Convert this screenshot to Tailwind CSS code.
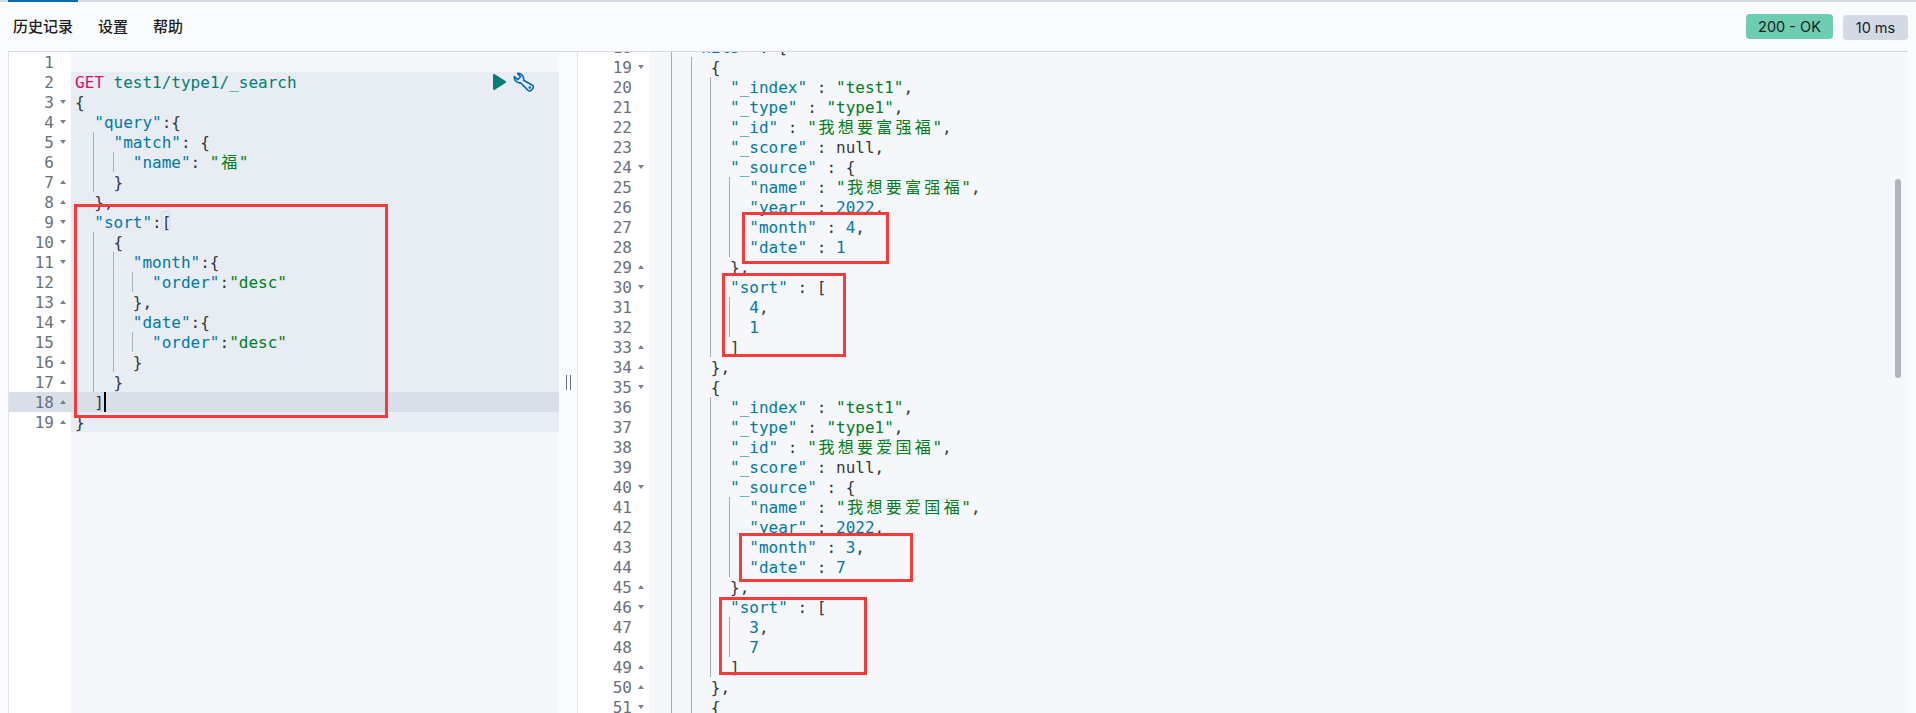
<!DOCTYPE html>
<html lang="zh">
<head>
<meta charset="utf-8">
<script src="https://cdn.jsdelivr.net/npm/@tailwindcss/browser@4"></script>
<title>Console</title>
</head>
<body class="relative h-[713px] w-[1916px] overflow-hidden bg-[#fafbfd] font-['Inter',sans-serif] text-[#1a1c21]">

<div class="h-[2px] bg-[#d3dae6]"><div class="ml-[8px] h-full w-[70px] bg-[#006bb4]"></div></div>

<header class="mx-[8px] flex h-[50px] items-center border-b border-[#d3dae6] pl-[5px]">
  <nav class="flex gap-[25px] pb-[1px] font-['Noto_Sans_CJK_SC',sans-serif] text-[15px] font-medium text-[#1a1c21]">
    <span>历史记录</span><span>设置</span><span>帮助</span>
  </nav>
  <div class="ml-auto flex items-start gap-[10px] pt-[1px] text-[14.5px]">
    <span class="flex h-[25px] w-[87px] items-center justify-center rounded-[4px] bg-[#6dccb1]">200 - OK</span>
    <span class="mt-[1px] flex h-[25px] w-[65px] items-center justify-center rounded-[4px] bg-[#d3dae6]">10 ms</span>
  </div>
</header>

<main class="mx-[8px] flex h-[661px] font-['DejaVu_Sans_Mono','Noto_Sans_CJK_SC',monospace] text-[16px] leading-[22px]">

  <section class="flex w-[569px] shrink-0">
    <div class="w-[63px] shrink-0 border-l border-[#dfe4ee] bg-white text-[#69707d]">
      <div class="flex h-5 justify-end">1<span class="w-[17px]"></span></div>
      <div class="flex h-5 justify-end">2<span class="w-[17px]"></span></div>
      <div class="flex h-5 justify-end">3<span class="flex h-5 w-[17px] items-center pl-[6px]"><span class="border-x-[3px] border-t-[4px] border-x-transparent border-t-[#7b808a]"></span></span></div>
      <div class="flex h-5 justify-end">4<span class="flex h-5 w-[17px] items-center pl-[6px]"><span class="border-x-[3px] border-t-[4px] border-x-transparent border-t-[#7b808a]"></span></span></div>
      <div class="flex h-5 justify-end">5<span class="flex h-5 w-[17px] items-center pl-[6px]"><span class="border-x-[3px] border-t-[4px] border-x-transparent border-t-[#7b808a]"></span></span></div>
      <div class="flex h-5 justify-end">6<span class="w-[17px]"></span></div>
      <div class="flex h-5 justify-end">7<span class="flex h-5 w-[17px] items-center pl-[6px]"><span class="border-x-[3px] border-b-[4px] border-x-transparent border-b-[#7b808a]"></span></span></div>
      <div class="flex h-5 justify-end">8<span class="flex h-5 w-[17px] items-center pl-[6px]"><span class="border-x-[3px] border-b-[4px] border-x-transparent border-b-[#7b808a]"></span></span></div>
      <div class="flex h-5 justify-end">9<span class="flex h-5 w-[17px] items-center pl-[6px]"><span class="border-x-[3px] border-t-[4px] border-x-transparent border-t-[#7b808a]"></span></span></div>
      <div class="flex h-5 justify-end">10<span class="flex h-5 w-[17px] items-center pl-[6px]"><span class="border-x-[3px] border-t-[4px] border-x-transparent border-t-[#7b808a]"></span></span></div>
      <div class="flex h-5 justify-end">11<span class="flex h-5 w-[17px] items-center pl-[6px]"><span class="border-x-[3px] border-t-[4px] border-x-transparent border-t-[#7b808a]"></span></span></div>
      <div class="flex h-5 justify-end">12<span class="w-[17px]"></span></div>
      <div class="flex h-5 justify-end">13<span class="flex h-5 w-[17px] items-center pl-[6px]"><span class="border-x-[3px] border-b-[4px] border-x-transparent border-b-[#7b808a]"></span></span></div>
      <div class="flex h-5 justify-end">14<span class="flex h-5 w-[17px] items-center pl-[6px]"><span class="border-x-[3px] border-t-[4px] border-x-transparent border-t-[#7b808a]"></span></span></div>
      <div class="flex h-5 justify-end">15<span class="w-[17px]"></span></div>
      <div class="flex h-5 justify-end">16<span class="flex h-5 w-[17px] items-center pl-[6px]"><span class="border-x-[3px] border-b-[4px] border-x-transparent border-b-[#7b808a]"></span></span></div>
      <div class="flex h-5 justify-end">17<span class="flex h-5 w-[17px] items-center pl-[6px]"><span class="border-x-[3px] border-b-[4px] border-x-transparent border-b-[#7b808a]"></span></span></div>
      <div class="flex h-5 justify-end bg-[#d9dfe9]">18<span class="flex h-5 w-[17px] items-center pl-[6px]"><span class="border-x-[3px] border-b-[4px] border-x-transparent border-b-[#7b808a]"></span></span></div>
      <div class="flex h-5 justify-end">19<span class="flex h-5 w-[17px] items-center pl-[6px]"><span class="border-x-[3px] border-b-[4px] border-x-transparent border-b-[#7b808a]"></span></span></div>
    </div>

    <div class="w-[488px] shrink-0 bg-[#f5f7fb] text-[#343741]">
      <div class="h-5"></div>
      <div class="bg-[#e8ecf3]">
        <div class="relative h-5 whitespace-pre pl-[4px]"><span class="text-[#dd0a73]">GET</span> <span class="text-[#017d73]">test1/type1/_search</span><svg class="absolute left-[422px] top-[2px] h-[16px] w-[13px]" viewBox="0 0 13 16"><path d="M0 1.2C0 .2 1 -.2 1.8 .3L12.4 7C13.2 7.5 13.2 8.5 12.4 9L1.8 15.7C1 16.2 0 15.8 0 14.8Z" fill="#017d73"/></svg><svg class="absolute left-[442px] top-0 h-[20px] w-[21px]" viewBox="0 0 21 20" fill="none" stroke="#006bb4" stroke-width="1.6" stroke-linejoin="round"><path d="M1.4 4.6L4.8 7.6L7.6 4.8L4.6 1.4A5.4 5.4 0 0 1 10.6 7.4Q10.6 7.9 10.5 8.2L19.4 13.2Q20.6 14.2 20 16.2L18.2 18.4Q16.6 19.4 15 18.4L7.6 10.8A5.4 5.4 0 0 1 1.4 4.6Z"/><circle cx="16.8" cy="15.6" r="1.3" fill="#006bb4" stroke="none"/></svg></div>
        <div class="h-5 whitespace-pre pl-[4px]">{</div>
        <div class="h-5 whitespace-pre pl-[4px]">  <span class="text-[#0079a5]">"query"</span>:{</div>
        <div class="flex h-5 whitespace-pre pl-[4px]"><span class="h-5 w-[2ch] border-r border-[#a9afbb]"></span><span>  <span class="text-[#0079a5]">"match"</span>: {</span></div>
        <div class="flex h-5 whitespace-pre pl-[4px]"><span class="h-5 w-[2ch] border-r border-[#a9afbb]"></span><span class="h-5 w-[2ch] border-r border-[#a9afbb]"></span><span>  <span class="text-[#0079a5]">"name"</span>: <span class="text-[#007d20]">"<span class="inline-block w-[2ch] text-center">福</span>"</span></span></div>
        <div class="flex h-5 whitespace-pre pl-[4px]"><span class="h-5 w-[2ch] border-r border-[#a9afbb]"></span><span>  }</span></div>
        <div class="h-5 whitespace-pre pl-[4px]">  },</div>
        <div class="relative h-5 whitespace-pre pl-[4px]">  <span class="text-[#0079a5]">"sort"</span>:[<span class="absolute left-[90px] top-[-1px] h-[20px] w-[9px] rounded-[3px] border border-[#d3d8e0]"></span></div>
        <div class="flex h-5 whitespace-pre pl-[4px]"><span class="h-5 w-[2ch] border-r border-[#a9afbb]"></span><span>  {</span></div>
        <div class="flex h-5 whitespace-pre pl-[4px]"><span class="h-5 w-[2ch] border-r border-[#a9afbb]"></span><span class="h-5 w-[2ch] border-r border-[#a9afbb]"></span><span>  <span class="text-[#0079a5]">"month"</span>:{</span></div>
        <div class="flex h-5 whitespace-pre pl-[4px]"><span class="h-5 w-[2ch] border-r border-[#a9afbb]"></span><span class="h-5 w-[2ch] border-r border-[#a9afbb]"></span><span class="h-5 w-[2ch] border-r border-[#a9afbb]"></span><span>  <span class="text-[#0079a5]">"order"</span>:<span class="text-[#007d20]">"desc"</span></span></div>
        <div class="flex h-5 whitespace-pre pl-[4px]"><span class="h-5 w-[2ch] border-r border-[#a9afbb]"></span><span class="h-5 w-[2ch] border-r border-[#a9afbb]"></span><span>  },</span></div>
        <div class="flex h-5 whitespace-pre pl-[4px]"><span class="h-5 w-[2ch] border-r border-[#a9afbb]"></span><span class="h-5 w-[2ch] border-r border-[#a9afbb]"></span><span>  <span class="text-[#0079a5]">"date"</span>:{</span></div>
        <div class="flex h-5 whitespace-pre pl-[4px]"><span class="h-5 w-[2ch] border-r border-[#a9afbb]"></span><span class="h-5 w-[2ch] border-r border-[#a9afbb]"></span><span class="h-5 w-[2ch] border-r border-[#a9afbb]"></span><span>  <span class="text-[#0079a5]">"order"</span>:<span class="text-[#007d20]">"desc"</span></span></div>
        <div class="flex h-5 whitespace-pre pl-[4px]"><span class="h-5 w-[2ch] border-r border-[#a9afbb]"></span><span class="h-5 w-[2ch] border-r border-[#a9afbb]"></span><span>  }</span></div>
        <div class="flex h-5 whitespace-pre pl-[4px]"><span class="h-5 w-[2ch] border-r border-[#a9afbb]"></span><span>  }</span></div>
        <div class="relative h-5 whitespace-pre bg-[#d9dfe9] pl-[4px]">  ]<span class="absolute left-[33px] top-0 h-5 w-[2px] bg-black"></span></div>
        <div class="h-5 whitespace-pre pl-[4px]">}</div>
      </div>
    </div>

    <div class="flex flex-1 items-center justify-center">
      <span class="h-[15px] w-[5px] border-x-[1.5px] border-[#69707d]"></span>
    </div>
  </section>

  <section class="relative flex min-w-0 flex-1 overflow-hidden">
    <div class="w-[72px] shrink-0 border-l border-[#dfe4ee] bg-white text-[#69707d]">
      <div class="-mt-[15px]">
      <div class="flex h-5 justify-end">18<span class="flex h-5 w-[17px] items-center pl-[6px]"><span class="border-x-[3px] border-t-[4px] border-x-transparent border-t-[#7b808a]"></span></span></div>
      <div class="flex h-5 justify-end">19<span class="flex h-5 w-[17px] items-center pl-[6px]"><span class="border-x-[3px] border-t-[4px] border-x-transparent border-t-[#7b808a]"></span></span></div>
      <div class="flex h-5 justify-end">20<span class="w-[17px]"></span></div>
      <div class="flex h-5 justify-end">21<span class="w-[17px]"></span></div>
      <div class="flex h-5 justify-end">22<span class="w-[17px]"></span></div>
      <div class="flex h-5 justify-end">23<span class="w-[17px]"></span></div>
      <div class="flex h-5 justify-end">24<span class="flex h-5 w-[17px] items-center pl-[6px]"><span class="border-x-[3px] border-t-[4px] border-x-transparent border-t-[#7b808a]"></span></span></div>
      <div class="flex h-5 justify-end">25<span class="w-[17px]"></span></div>
      <div class="flex h-5 justify-end">26<span class="w-[17px]"></span></div>
      <div class="flex h-5 justify-end">27<span class="w-[17px]"></span></div>
      <div class="flex h-5 justify-end">28<span class="w-[17px]"></span></div>
      <div class="flex h-5 justify-end">29<span class="flex h-5 w-[17px] items-center pl-[6px]"><span class="border-x-[3px] border-b-[4px] border-x-transparent border-b-[#7b808a]"></span></span></div>
      <div class="flex h-5 justify-end">30<span class="flex h-5 w-[17px] items-center pl-[6px]"><span class="border-x-[3px] border-t-[4px] border-x-transparent border-t-[#7b808a]"></span></span></div>
      <div class="flex h-5 justify-end">31<span class="w-[17px]"></span></div>
      <div class="flex h-5 justify-end">32<span class="w-[17px]"></span></div>
      <div class="flex h-5 justify-end">33<span class="flex h-5 w-[17px] items-center pl-[6px]"><span class="border-x-[3px] border-b-[4px] border-x-transparent border-b-[#7b808a]"></span></span></div>
      <div class="flex h-5 justify-end">34<span class="flex h-5 w-[17px] items-center pl-[6px]"><span class="border-x-[3px] border-b-[4px] border-x-transparent border-b-[#7b808a]"></span></span></div>
      <div class="flex h-5 justify-end">35<span class="flex h-5 w-[17px] items-center pl-[6px]"><span class="border-x-[3px] border-t-[4px] border-x-transparent border-t-[#7b808a]"></span></span></div>
      <div class="flex h-5 justify-end">36<span class="w-[17px]"></span></div>
      <div class="flex h-5 justify-end">37<span class="w-[17px]"></span></div>
      <div class="flex h-5 justify-end">38<span class="w-[17px]"></span></div>
      <div class="flex h-5 justify-end">39<span class="w-[17px]"></span></div>
      <div class="flex h-5 justify-end">40<span class="flex h-5 w-[17px] items-center pl-[6px]"><span class="border-x-[3px] border-t-[4px] border-x-transparent border-t-[#7b808a]"></span></span></div>
      <div class="flex h-5 justify-end">41<span class="w-[17px]"></span></div>
      <div class="flex h-5 justify-end">42<span class="w-[17px]"></span></div>
      <div class="flex h-5 justify-end">43<span class="w-[17px]"></span></div>
      <div class="flex h-5 justify-end">44<span class="w-[17px]"></span></div>
      <div class="flex h-5 justify-end">45<span class="flex h-5 w-[17px] items-center pl-[6px]"><span class="border-x-[3px] border-b-[4px] border-x-transparent border-b-[#7b808a]"></span></span></div>
      <div class="flex h-5 justify-end">46<span class="flex h-5 w-[17px] items-center pl-[6px]"><span class="border-x-[3px] border-t-[4px] border-x-transparent border-t-[#7b808a]"></span></span></div>
      <div class="flex h-5 justify-end">47<span class="w-[17px]"></span></div>
      <div class="flex h-5 justify-end">48<span class="w-[17px]"></span></div>
      <div class="flex h-5 justify-end">49<span class="flex h-5 w-[17px] items-center pl-[6px]"><span class="border-x-[3px] border-b-[4px] border-x-transparent border-b-[#7b808a]"></span></span></div>
      <div class="flex h-5 justify-end">50<span class="flex h-5 w-[17px] items-center pl-[6px]"><span class="border-x-[3px] border-b-[4px] border-x-transparent border-b-[#7b808a]"></span></span></div>
      <div class="flex h-5 justify-end">51<span class="flex h-5 w-[17px] items-center pl-[6px]"><span class="border-x-[3px] border-t-[4px] border-x-transparent border-t-[#7b808a]"></span></span></div>
      </div>
    </div>

    <div class="relative min-w-0 flex-1 bg-[#f5f7fb] pl-[4px] text-[#343741]">
      <div class="-mt-[15px]">
      <div class="flex h-5 whitespace-pre"><span class="h-5 w-[2ch] border-r border-[#a4abbb]"></span><span>  <span class="text-[#0079a5]">"hits"</span> : [</span></div>
      <div class="flex h-5 whitespace-pre"><span class="h-5 w-[2ch] border-r border-[#a4abbb]"></span><span class="h-5 w-[2ch] border-r border-[#a4abbb]"></span><span>  {</span></div>
      <div class="flex h-5 whitespace-pre"><span class="h-5 w-[2ch] border-r border-[#a4abbb]"></span><span class="h-5 w-[2ch] border-r border-[#a4abbb]"></span><span class="h-5 w-[2ch] border-r border-[#a4abbb]"></span><span>  <span class="text-[#0079a5]">"_index"</span> : <span class="text-[#007d20]">"test1"</span>,</span></div>
      <div class="flex h-5 whitespace-pre"><span class="h-5 w-[2ch] border-r border-[#a4abbb]"></span><span class="h-5 w-[2ch] border-r border-[#a4abbb]"></span><span class="h-5 w-[2ch] border-r border-[#a4abbb]"></span><span>  <span class="text-[#0079a5]">"_type"</span> : <span class="text-[#007d20]">"type1"</span>,</span></div>
      <div class="flex h-5 whitespace-pre"><span class="h-5 w-[2ch] border-r border-[#a4abbb]"></span><span class="h-5 w-[2ch] border-r border-[#a4abbb]"></span><span class="h-5 w-[2ch] border-r border-[#a4abbb]"></span><span>  <span class="text-[#0079a5]">"_id"</span> : <span class="text-[#007d20]">"<span class="inline-block w-[2ch] text-center">我</span><span class="inline-block w-[2ch] text-center">想</span><span class="inline-block w-[2ch] text-center">要</span><span class="inline-block w-[2ch] text-center">富</span><span class="inline-block w-[2ch] text-center">强</span><span class="inline-block w-[2ch] text-center">福</span>"</span>,</span></div>
      <div class="flex h-5 whitespace-pre"><span class="h-5 w-[2ch] border-r border-[#a4abbb]"></span><span class="h-5 w-[2ch] border-r border-[#a4abbb]"></span><span class="h-5 w-[2ch] border-r border-[#a4abbb]"></span><span>  <span class="text-[#0079a5]">"_score"</span> : null,</span></div>
      <div class="flex h-5 whitespace-pre"><span class="h-5 w-[2ch] border-r border-[#a4abbb]"></span><span class="h-5 w-[2ch] border-r border-[#a4abbb]"></span><span class="h-5 w-[2ch] border-r border-[#a4abbb]"></span><span>  <span class="text-[#0079a5]">"_source"</span> : {</span></div>
      <div class="flex h-5 whitespace-pre"><span class="h-5 w-[2ch] border-r border-[#a4abbb]"></span><span class="h-5 w-[2ch] border-r border-[#a4abbb]"></span><span class="h-5 w-[2ch] border-r border-[#a4abbb]"></span><span class="h-5 w-[2ch] border-r border-[#a4abbb]"></span><span>  <span class="text-[#0079a5]">"name"</span> : <span class="text-[#007d20]">"<span class="inline-block w-[2ch] text-center">我</span><span class="inline-block w-[2ch] text-center">想</span><span class="inline-block w-[2ch] text-center">要</span><span class="inline-block w-[2ch] text-center">富</span><span class="inline-block w-[2ch] text-center">强</span><span class="inline-block w-[2ch] text-center">福</span>"</span>,</span></div>
      <div class="flex h-5 whitespace-pre"><span class="h-5 w-[2ch] border-r border-[#a4abbb]"></span><span class="h-5 w-[2ch] border-r border-[#a4abbb]"></span><span class="h-5 w-[2ch] border-r border-[#a4abbb]"></span><span class="h-5 w-[2ch] border-r border-[#a4abbb]"></span><span>  <span class="text-[#0079a5]">"year"</span> : <span class="text-[#0079a5]">2022</span>,</span></div>
      <div class="flex h-5 whitespace-pre"><span class="h-5 w-[2ch] border-r border-[#a4abbb]"></span><span class="h-5 w-[2ch] border-r border-[#a4abbb]"></span><span class="h-5 w-[2ch] border-r border-[#a4abbb]"></span><span class="h-5 w-[2ch] border-r border-[#a4abbb]"></span><span>  <span class="text-[#0079a5]">"month"</span> : <span class="text-[#0079a5]">4</span>,</span></div>
      <div class="flex h-5 whitespace-pre"><span class="h-5 w-[2ch] border-r border-[#a4abbb]"></span><span class="h-5 w-[2ch] border-r border-[#a4abbb]"></span><span class="h-5 w-[2ch] border-r border-[#a4abbb]"></span><span class="h-5 w-[2ch] border-r border-[#a4abbb]"></span><span>  <span class="text-[#0079a5]">"date"</span> : <span class="text-[#0079a5]">1</span></span></div>
      <div class="flex h-5 whitespace-pre"><span class="h-5 w-[2ch] border-r border-[#a4abbb]"></span><span class="h-5 w-[2ch] border-r border-[#a4abbb]"></span><span class="h-5 w-[2ch] border-r border-[#a4abbb]"></span><span>  },</span></div>
      <div class="flex h-5 whitespace-pre"><span class="h-5 w-[2ch] border-r border-[#a4abbb]"></span><span class="h-5 w-[2ch] border-r border-[#a4abbb]"></span><span class="h-5 w-[2ch] border-r border-[#a4abbb]"></span><span>  <span class="text-[#0079a5]">"sort"</span> : [</span></div>
      <div class="flex h-5 whitespace-pre"><span class="h-5 w-[2ch] border-r border-[#a4abbb]"></span><span class="h-5 w-[2ch] border-r border-[#a4abbb]"></span><span class="h-5 w-[2ch] border-r border-[#a4abbb]"></span><span class="h-5 w-[2ch] border-r border-[#a4abbb]"></span><span>  <span class="text-[#0079a5]">4</span>,</span></div>
      <div class="flex h-5 whitespace-pre"><span class="h-5 w-[2ch] border-r border-[#a4abbb]"></span><span class="h-5 w-[2ch] border-r border-[#a4abbb]"></span><span class="h-5 w-[2ch] border-r border-[#a4abbb]"></span><span class="h-5 w-[2ch] border-r border-[#a4abbb]"></span><span>  <span class="text-[#0079a5]">1</span></span></div>
      <div class="flex h-5 whitespace-pre"><span class="h-5 w-[2ch] border-r border-[#a4abbb]"></span><span class="h-5 w-[2ch] border-r border-[#a4abbb]"></span><span class="h-5 w-[2ch] border-r border-[#a4abbb]"></span><span>  ]</span></div>
      <div class="flex h-5 whitespace-pre"><span class="h-5 w-[2ch] border-r border-[#a4abbb]"></span><span class="h-5 w-[2ch] border-r border-[#a4abbb]"></span><span>  },</span></div>
      <div class="flex h-5 whitespace-pre"><span class="h-5 w-[2ch] border-r border-[#a4abbb]"></span><span class="h-5 w-[2ch] border-r border-[#a4abbb]"></span><span>  {</span></div>
      <div class="flex h-5 whitespace-pre"><span class="h-5 w-[2ch] border-r border-[#a4abbb]"></span><span class="h-5 w-[2ch] border-r border-[#a4abbb]"></span><span class="h-5 w-[2ch] border-r border-[#a4abbb]"></span><span>  <span class="text-[#0079a5]">"_index"</span> : <span class="text-[#007d20]">"test1"</span>,</span></div>
      <div class="flex h-5 whitespace-pre"><span class="h-5 w-[2ch] border-r border-[#a4abbb]"></span><span class="h-5 w-[2ch] border-r border-[#a4abbb]"></span><span class="h-5 w-[2ch] border-r border-[#a4abbb]"></span><span>  <span class="text-[#0079a5]">"_type"</span> : <span class="text-[#007d20]">"type1"</span>,</span></div>
      <div class="flex h-5 whitespace-pre"><span class="h-5 w-[2ch] border-r border-[#a4abbb]"></span><span class="h-5 w-[2ch] border-r border-[#a4abbb]"></span><span class="h-5 w-[2ch] border-r border-[#a4abbb]"></span><span>  <span class="text-[#0079a5]">"_id"</span> : <span class="text-[#007d20]">"<span class="inline-block w-[2ch] text-center">我</span><span class="inline-block w-[2ch] text-center">想</span><span class="inline-block w-[2ch] text-center">要</span><span class="inline-block w-[2ch] text-center">爱</span><span class="inline-block w-[2ch] text-center">国</span><span class="inline-block w-[2ch] text-center">福</span>"</span>,</span></div>
      <div class="flex h-5 whitespace-pre"><span class="h-5 w-[2ch] border-r border-[#a4abbb]"></span><span class="h-5 w-[2ch] border-r border-[#a4abbb]"></span><span class="h-5 w-[2ch] border-r border-[#a4abbb]"></span><span>  <span class="text-[#0079a5]">"_score"</span> : null,</span></div>
      <div class="flex h-5 whitespace-pre"><span class="h-5 w-[2ch] border-r border-[#a4abbb]"></span><span class="h-5 w-[2ch] border-r border-[#a4abbb]"></span><span class="h-5 w-[2ch] border-r border-[#a4abbb]"></span><span>  <span class="text-[#0079a5]">"_source"</span> : {</span></div>
      <div class="flex h-5 whitespace-pre"><span class="h-5 w-[2ch] border-r border-[#a4abbb]"></span><span class="h-5 w-[2ch] border-r border-[#a4abbb]"></span><span class="h-5 w-[2ch] border-r border-[#a4abbb]"></span><span class="h-5 w-[2ch] border-r border-[#a4abbb]"></span><span>  <span class="text-[#0079a5]">"name"</span> : <span class="text-[#007d20]">"<span class="inline-block w-[2ch] text-center">我</span><span class="inline-block w-[2ch] text-center">想</span><span class="inline-block w-[2ch] text-center">要</span><span class="inline-block w-[2ch] text-center">爱</span><span class="inline-block w-[2ch] text-center">国</span><span class="inline-block w-[2ch] text-center">福</span>"</span>,</span></div>
      <div class="flex h-5 whitespace-pre"><span class="h-5 w-[2ch] border-r border-[#a4abbb]"></span><span class="h-5 w-[2ch] border-r border-[#a4abbb]"></span><span class="h-5 w-[2ch] border-r border-[#a4abbb]"></span><span class="h-5 w-[2ch] border-r border-[#a4abbb]"></span><span>  <span class="text-[#0079a5]">"year"</span> : <span class="text-[#0079a5]">2022</span>,</span></div>
      <div class="flex h-5 whitespace-pre"><span class="h-5 w-[2ch] border-r border-[#a4abbb]"></span><span class="h-5 w-[2ch] border-r border-[#a4abbb]"></span><span class="h-5 w-[2ch] border-r border-[#a4abbb]"></span><span class="h-5 w-[2ch] border-r border-[#a4abbb]"></span><span>  <span class="text-[#0079a5]">"month"</span> : <span class="text-[#0079a5]">3</span>,</span></div>
      <div class="flex h-5 whitespace-pre"><span class="h-5 w-[2ch] border-r border-[#a4abbb]"></span><span class="h-5 w-[2ch] border-r border-[#a4abbb]"></span><span class="h-5 w-[2ch] border-r border-[#a4abbb]"></span><span class="h-5 w-[2ch] border-r border-[#a4abbb]"></span><span>  <span class="text-[#0079a5]">"date"</span> : <span class="text-[#0079a5]">7</span></span></div>
      <div class="flex h-5 whitespace-pre"><span class="h-5 w-[2ch] border-r border-[#a4abbb]"></span><span class="h-5 w-[2ch] border-r border-[#a4abbb]"></span><span class="h-5 w-[2ch] border-r border-[#a4abbb]"></span><span>  },</span></div>
      <div class="flex h-5 whitespace-pre"><span class="h-5 w-[2ch] border-r border-[#a4abbb]"></span><span class="h-5 w-[2ch] border-r border-[#a4abbb]"></span><span class="h-5 w-[2ch] border-r border-[#a4abbb]"></span><span>  <span class="text-[#0079a5]">"sort"</span> : [</span></div>
      <div class="flex h-5 whitespace-pre"><span class="h-5 w-[2ch] border-r border-[#a4abbb]"></span><span class="h-5 w-[2ch] border-r border-[#a4abbb]"></span><span class="h-5 w-[2ch] border-r border-[#a4abbb]"></span><span class="h-5 w-[2ch] border-r border-[#a4abbb]"></span><span>  <span class="text-[#0079a5]">3</span>,</span></div>
      <div class="flex h-5 whitespace-pre"><span class="h-5 w-[2ch] border-r border-[#a4abbb]"></span><span class="h-5 w-[2ch] border-r border-[#a4abbb]"></span><span class="h-5 w-[2ch] border-r border-[#a4abbb]"></span><span class="h-5 w-[2ch] border-r border-[#a4abbb]"></span><span>  <span class="text-[#0079a5]">7</span></span></div>
      <div class="flex h-5 whitespace-pre"><span class="h-5 w-[2ch] border-r border-[#a4abbb]"></span><span class="h-5 w-[2ch] border-r border-[#a4abbb]"></span><span class="h-5 w-[2ch] border-r border-[#a4abbb]"></span><span>  ]</span></div>
      <div class="flex h-5 whitespace-pre"><span class="h-5 w-[2ch] border-r border-[#a4abbb]"></span><span class="h-5 w-[2ch] border-r border-[#a4abbb]"></span><span>  },</span></div>
      <div class="flex h-5 whitespace-pre"><span class="h-5 w-[2ch] border-r border-[#a4abbb]"></span><span class="h-5 w-[2ch] border-r border-[#a4abbb]"></span><span>  {</span></div>
      </div>
      <div class="absolute left-[1246px] top-[127px] h-[199px] w-[6px] rounded-[3px] bg-[#b0b5bd]"></div>
    </div>
  </section>
</main>

<div class="absolute left-[74px] top-[204px] h-[214px] w-[314px] border-[3px] border-[#f93a3a]"></div>
<div class="absolute left-[742px] top-[212px] h-[52px] w-[147px] border-[3px] border-[#f93a3a]"></div>
<div class="absolute left-[722px] top-[273px] h-[84px] w-[124px] border-[3px] border-[#f93a3a]"></div>
<div class="absolute left-[739px] top-[533px] h-[49px] w-[174px] border-[3px] border-[#f93a3a]"></div>
<div class="absolute left-[719px] top-[597px] h-[78px] w-[148px] border-[3px] border-[#f93a3a]"></div>

</body>
</html>
